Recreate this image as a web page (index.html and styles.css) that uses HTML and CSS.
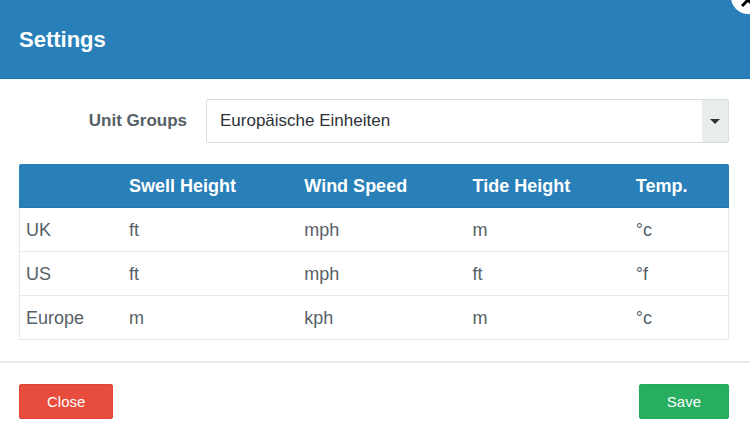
FILE: index.html
```
<!DOCTYPE html>
<html lang="en">
<head>
    <meta charset="UTF-8">
    <title>Settings</title>
    <link rel="stylesheet" href="styles.css">
</head>
<body>
    <form class="modal">
        <div class="header">
            <h1>Settings</h1>
            <button type="button" class="dismiss" aria-label="Dismiss">
                <svg width="14" height="14" viewBox="0 0 14 14">
                    <path d="M1 1L13 13M13 1L1 13" fill="none" stroke="#000" stroke-width="3"/>
                </svg>
            </button>
        </div>
        <div class="content">
            <div class="field">
                <label for="units">Unit Groups</label>
                <div class="select">
                    <select id="units">
                        <option selected>Europäische Einheiten</option>
                        <option>UK</option>
                        <option>US</option>
                    </select>
                </div>
            </div>
            <table class="units">
                <colgroup>
                    <col class="col-group">
                    <col class="col-swell">
                    <col class="col-wind">
                    <col class="col-tide">
                    <col class="col-temp">
                </colgroup>
                <thead>
                    <tr>
                        <th></th>
                        <th>Swell Height</th>
                        <th>Wind Speed</th>
                        <th>Tide Height</th>
                        <th>Temp.</th>
                    </tr>
                </thead>
                <tbody>
                    <tr>
                        <td>UK</td>
                        <td>ft</td>
                        <td>mph</td>
                        <td>m</td>
                        <td>°c</td>
                    </tr>
                    <tr>
                        <td>US</td>
                        <td>ft</td>
                        <td>mph</td>
                        <td>ft</td>
                        <td>°f</td>
                    </tr>
                    <tr>
                        <td>Europe</td>
                        <td>m</td>
                        <td>kph</td>
                        <td>m</td>
                        <td>°c</td>
                    </tr>
                </tbody>
            </table>
        </div>
        <div class="footer">
            <button type="button" class="btn btn-close">Close</button>
            <button type="submit" class="btn btn-save">Save</button>
        </div>
    </form>
</body>
</html>
```
FILE: styles.css
```
*{
    padding:0;
    margin:0;
    box-sizing:border-box;
}
body{
    font-family:"Liberation Sans", Arial, sans-serif;
    font-size:18px;
    line-height:24px;
    color:#566067;
    background:#fff;
    overflow:hidden;
}
.header{
    position:relative;
    padding:25px 19px 23px;
    background:#2980b9;
    border-bottom:1px solid #1f79b5;
}
.header h1{
    font-size:22px;
    line-height:30px;
    color:#fff;
}
.dismiss{
    position:absolute;
    top:-20px;
    right:-15px;
    width:34px;
    height:34px;
    display:flex;
    justify-content:center;
    align-items:flex-end;
    padding-bottom:7px;
    border:0;
    border-radius:50%;
    background:#fff;
}
.content{
    padding:20px 21px 21px 19px;
}
.field{
    display:flex;
    align-items:center;
    margin-bottom:21px;
    font-size:17px;
}
.field label{
    width:168px;
    margin-right:19px;
    text-align:right;
    font-weight:bold;
}
.select{
    position:relative;
    flex:1;
}
.select select{
    display:block;
    width:100%;
    height:44px;
    padding:0 40px 0 13px;
    border:1px solid #d5dddf;
    border-radius:2px;
    background:linear-gradient(#e8edee, #e8edee) right / 26px 100% no-repeat #fff;
    font:inherit;
    color:#2e3236;
    appearance:none;
}
.select::after{
    content:"";
    position:absolute;
    top:20px;
    right:9px;
    border:5px solid transparent;
    border-top-color:#333;
    border-bottom:0;
    pointer-events:none;
}
.units{
    width:100%;
    table-layout:fixed;
    border-collapse:separate;
    border-spacing:0;
}
.col-group{
    width:14.5%;
}
.col-swell{
    width:24.7%;
}
.col-wind{
    width:23.7%;
}
.col-tide{
    width:23%;
}
.col-temp{
    width:14.1%;
}
.units th,
.units td{
    height:44px;
    padding:0 7px;
    text-align:left;
    border-bottom:1px solid #e8e9ea;
}
.units th{
    color:#fff;
    background:#2980b9;
    border-color:#1f79b5;
}
.units th:first-child{
    border-top-left-radius:2px;
}
.units th:last-child{
    border-top-right-radius:2px;
}
.units td:first-child{
    border-left:1px solid #e8e9ea;
    padding-left:6px;
}
.units td:last-child{
    border-right:1px solid #e8e9ea;
}
.footer{
    display:flex;
    justify-content:space-between;
    padding:21px 21px 19px 19px;
    border-top:2px solid #e9eaea;
}
.btn{
    height:35px;
    padding:0 27px;
    border:1px solid;
    border-radius:2px;
    font-family:inherit;
    font-size:15px;
    color:#fff;
    cursor:pointer;
}
.btn-close{
    background:#e74c3c;
    border-color:#e44334;
}
.btn-save{
    background:#27ae60;
    border-color:#22aa5b;
}
```
